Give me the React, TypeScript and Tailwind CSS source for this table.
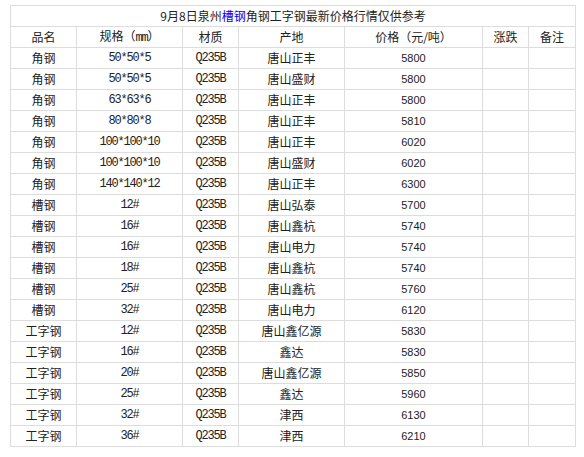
const rows: [string, string, string, string, string][] = [
  ["角钢", "50*50*5", "Q235B", "唐山正丰", "5800"],
  ["角钢", "50*50*5", "Q235B", "唐山盛财", "5800"],
  ["角钢", "63*63*6", "Q235B", "唐山正丰", "5800"],
  ["角钢", "80*80*8", "Q235B", "唐山正丰", "5810"],
  ["角钢", "100*100*10", "Q235B", "唐山正丰", "6020"],
  ["角钢", "100*100*10", "Q235B", "唐山盛财", "6020"],
  ["角钢", "140*140*12", "Q235B", "唐山正丰", "6300"],
  ["槽钢", "12#", "Q235B", "唐山弘泰", "5700"],
  ["槽钢", "16#", "Q235B", "唐山鑫杭", "5740"],
  ["槽钢", "16#", "Q235B", "唐山电力", "5740"],
  ["槽钢", "18#", "Q235B", "唐山鑫杭", "5740"],
  ["槽钢", "25#", "Q235B", "唐山鑫杭", "5760"],
  ["槽钢", "32#", "Q235B", "唐山电力", "6120"],
  ["工字钢", "12#", "Q235B", "唐山鑫亿源", "5830"],
  ["工字钢", "16#", "Q235B", "鑫达", "5830"],
  ["工字钢", "20#", "Q235B", "唐山鑫亿源", "5850"],
  ["工字钢", "25#", "Q235B", "鑫达", "5960"],
  ["工字钢", "32#", "Q235B", "津西", "6130"],
  ["工字钢", "36#", "Q235B", "津西", "6210"],
];

const cjk = "font-['Noto_Sans_CJK_SC',sans-serif] text-[12px]";
const mono = "font-['Liberation_Mono',monospace] text-[12px] tracking-[-1.2px]";
const num = "font-['Liberation_Sans',sans-serif] text-[11px]";
const td = "border border-[#dddddd] p-0 text-center align-middle leading-none";

export default function App() {
  return (
    <div className="min-h-[457px] w-[584px] bg-white pl-[10px] pt-[5px] text-[#222222]">
      <table className="w-[565px] table-fixed border-collapse">
        <colgroup>
          <col className="w-[66px]" />
          <col className="w-[106px]" />
          <col className="w-[56px]" />
          <col className="w-[106px]" />
          <col className="w-[138px]" />
          <col className="w-[46px]" />
          <col className="w-[47px]" />
        </colgroup>
        <tbody>
          <tr className="h-[21px]">
            <td colSpan={7} className={`${td} ${cjk}`}>
              9月8日泉州<span className="text-[#0000ee]">槽钢</span>角钢工字钢最新价格行情仅供参考
            </td>
          </tr>
          <tr className={`h-[21px] ${cjk}`}>
            <td className={td}>品名</td>
            <td className={td}>
              规格（<span className={mono}>mm</span>）
            </td>
            <td className={td}>材质</td>
            <td className={td}>产地</td>
            <td className={td}>价格（元/吨）</td>
            <td className={td}>涨跌</td>
            <td className={td}>备注</td>
          </tr>
          {rows.map((r, i) => (
            <tr key={i} className="h-[21px]">
              <td className={`${td} ${cjk}`}>{r[0]}</td>
              <td className={`${td} ${mono}`}>{r[1]}</td>
              <td className={`${td} ${mono}`}>{r[2]}</td>
              <td className={`${td} ${cjk}`}>{r[3]}</td>
              <td className={`${td} ${num}`}>{r[4]}</td>
              <td className={td}></td>
              <td className={td}></td>
            </tr>
          ))}
        </tbody>
      </table>
    </div>
  );
}
